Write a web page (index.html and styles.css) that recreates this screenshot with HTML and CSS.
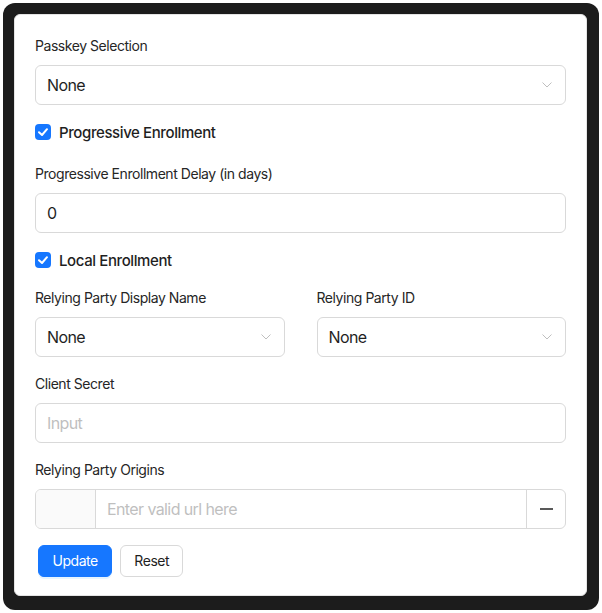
FILE: index.html
```html
<!DOCTYPE html>
<html lang="en">
<head>
<meta charset="utf-8">
<title>Passkey Settings</title>
<link rel="stylesheet" href="styles.css">
</head>
<body>
<div class="frame">
  <form class="card">
    <div class="item">
      <label class="label">Passkey Selection</label>
      <div class="select"><span class="value">None</span><svg class="chev" viewBox="0 0 10 6" width="10" height="6"><path d="M0.5 0.5 L5 5 L9.5 0.5" fill="none" stroke="#bfbfbf" stroke-width="1"/></svg></div>
    </div>
    <label class="check check-first"><span class="box"><svg viewBox="0 0 16 16" width="16" height="16"><path d="M4 8.2 L7 11 L12 5.2" fill="none" stroke="#fff" stroke-width="2" stroke-linecap="round" stroke-linejoin="round"/></svg></span><span class="check-text">Progressive Enrollment</span></label>
    <div class="item">
      <label class="label">Progressive Enrollment Delay (in days)</label>
      <div class="input"><span class="value">0</span></div>
    </div>
    <label class="check"><span class="box"><svg viewBox="0 0 16 16" width="16" height="16"><path d="M4 8.2 L7 11 L12 5.2" fill="none" stroke="#fff" stroke-width="2" stroke-linecap="round" stroke-linejoin="round"/></svg></span><span class="check-text">Local Enrollment</span></label>
    <div class="cols">
      <div class="item">
        <label class="label">Relying Party Display Name</label>
        <div class="select"><span class="value">None</span><svg class="chev" viewBox="0 0 10 6" width="10" height="6"><path d="M0.5 0.5 L5 5 L9.5 0.5" fill="none" stroke="#bfbfbf" stroke-width="1"/></svg></div>
      </div>
      <div class="item">
        <label class="label">Relying Party ID</label>
        <div class="select"><span class="value">None</span><svg class="chev" viewBox="0 0 10 6" width="10" height="6"><path d="M0.5 0.5 L5 5 L9.5 0.5" fill="none" stroke="#bfbfbf" stroke-width="1"/></svg></div>
      </div>
    </div>
    <div class="item">
      <label class="label">Client Secret</label>
      <div class="input"><span class="placeholder">Input</span></div>
    </div>
    <div class="item">
      <label class="label">Relying Party Origins</label>
      <div class="group">
        <span class="addon"></span>
        <span class="group-input"><span class="placeholder">Enter valid url here</span></span>
        <span class="group-btn"><span class="minus"></span></span>
      </div>
    </div>
    <div class="actions">
      <button type="button" class="btn btn-primary">Update</button>
      <button type="button" class="btn">Reset</button>
    </div>
  </form>
</div>
</body>
</html>
```
FILE: styles.css
```css
* { box-sizing: border-box; }
html, body { margin: 0; padding: 0; background: #ffffff; }
body {
  font-family: Inter, "Noto Sans", "Liberation Sans", sans-serif;
  color: #1f1f1f;
}
.frame {
  margin: 3px;
  width: 596px;
  height: 607px;
  background: #1c1c1c;
  border-radius: 12px;
  padding: 11px 12px 14px 11px;
}
.card {
  background: #fff;
  border: 1px solid #e4e4e4;
  border-radius: 6px;
  height: 582px;
  padding: 20px;
  margin: 0;
}
.item { margin-bottom: 16px; }
.label {
  display: block;
  font-size: 14px;
  line-height: 22px;
  height: 22px;
  margin-bottom: 8px;
  color: #262626;
  letter-spacing: -0.45px;
}
.select, .input {
  height: 40px;
  border: 1px solid #d9d9d9;
  border-radius: 6px;
  display: flex;
  align-items: center;
  padding: 0 12px 0 11px;
  font-size: 16px;
  letter-spacing: -0.6px;
}
.select { justify-content: space-between; }
.chev { margin-right: 1px; }
.value { color: #1f1f1f; }
.placeholder { color: #bfbfbf; font-size: 16px; letter-spacing: -0.6px; }
.check {
  display: flex;
  align-items: center;
  height: 22px;
  margin-bottom: 16px;
  gap: 8px;
}
.check-first { margin-bottom: 20px; }
.box {
  width: 16px;
  height: 16px;
  border-radius: 4px;
  background: #1677ff;
  display: flex;
}
.check-text { font-size: 15px; font-weight: 500; color: #1f1f1f; letter-spacing: -0.4px; }
.cols {
  display: grid;
  grid-template-columns: 1fr 1fr;
  column-gap: 32px;
}
.group {
  display: flex;
  height: 40px;
  border: 1px solid #d9d9d9;
  border-radius: 6px;
  overflow: hidden;
}
.addon {
  width: 60px;
  background: #fafafa;
  border-right: 1px solid #d9d9d9;
}
.group-input {
  flex: 1;
  display: flex;
  align-items: center;
  padding-left: 11px;
}
.group-btn {
  width: 39px;
  border-left: 1px solid #d9d9d9;
  display: flex;
  align-items: center;
  justify-content: center;
}
.minus {
  width: 13px;
  height: 2px;
  background: #595959;
}
.actions {
  display: flex;
  gap: 8px;
  padding-left: 3px;
}
.btn {
  height: 32px;
  font-family: inherit;
  font-size: 14px;
  letter-spacing: -0.45px;
  padding: 0 13px;
  border-radius: 6px;
  border: 1px solid #d9d9d9;
  background: #fff;
  color: #1f1f1f;
  line-height: 30px;
}
.btn-primary {
  padding: 0 13.5px;
  background: #1677ff;
  border-color: #1677ff;
  color: #fff;
  box-shadow: 0 2px 0 rgba(5, 145, 255, 0.1);
}
```
